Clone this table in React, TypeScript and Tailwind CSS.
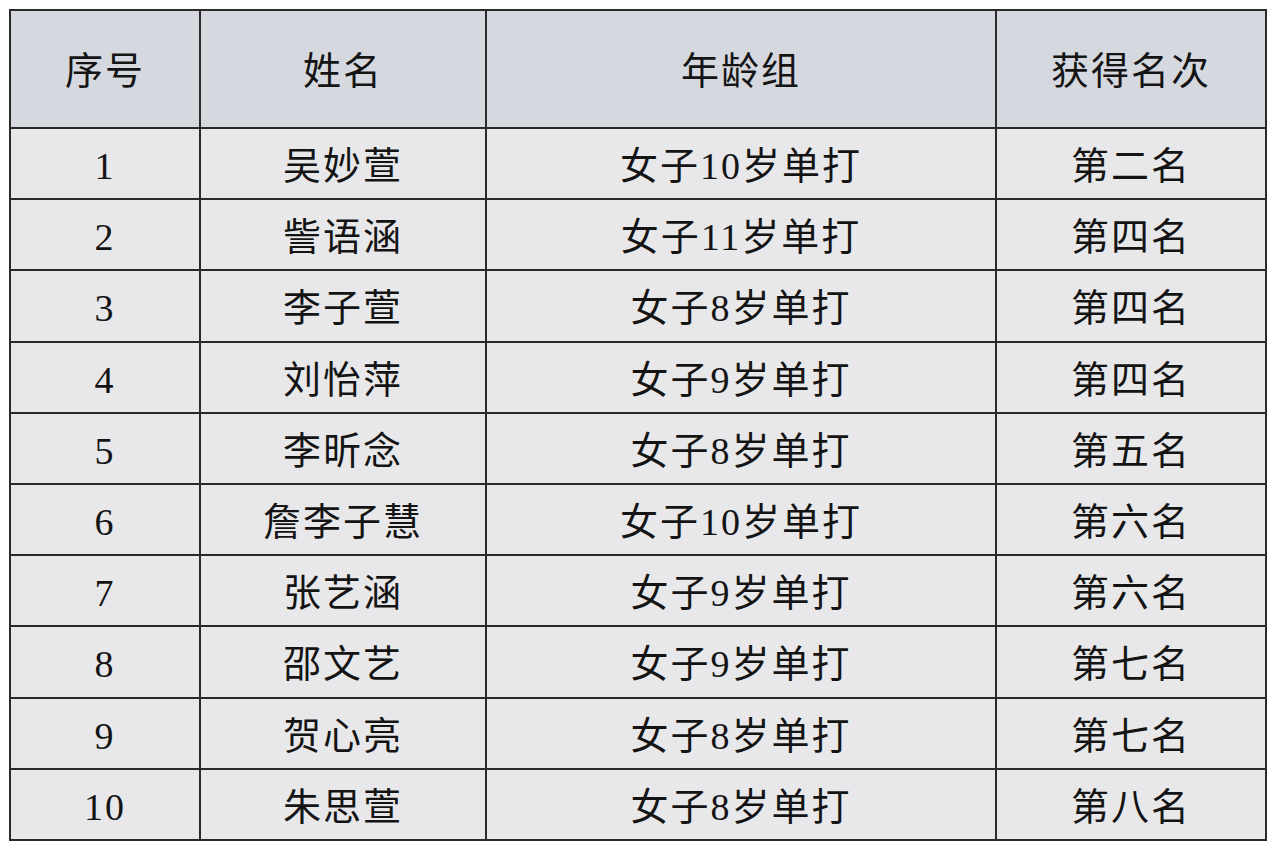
const rows = [
  ["1", "吴妙萱", "女子10岁单打", "第二名"],
  ["2", "訾语涵", "女子11岁单打", "第四名"],
  ["3", "李子萱", "女子8岁单打", "第四名"],
  ["4", "刘怡萍", "女子9岁单打", "第四名"],
  ["5", "李昕念", "女子8岁单打", "第五名"],
  ["6", "詹李子慧", "女子10岁单打", "第六名"],
  ["7", "张艺涵", "女子9岁单打", "第六名"],
  ["8", "邵文艺", "女子9岁单打", "第七名"],
  ["9", "贺心亮", "女子8岁单打", "第七名"],
  ["10", "朱思萱", "女子8岁单打", "第八名"],
];

const headers = ["序号", "姓名", "年龄组", "获得名次"];

// digits get the serif face, CJK falls back to Noto
function Cell({ text }: { text: string }) {
  const parts = text.split(/(\d+)/).filter(Boolean);
  return (
    <>
      {parts.map((p, i) =>
        /^\d+$/.test(p) ? (
          <span key={i} style={{ fontFamily: '"Liberation Serif", serif' }}>
            {p}
          </span>
        ) : (
          <span key={i}>{p}</span>
        )
      )}
    </>
  );
}

export default function App() {
  return (
    <div
      className="w-[1280px] h-[853px] bg-white pt-[9px] pl-[9px]"
      style={{ fontFamily: '"Liberation Serif", "Noto Sans CJK SC", serif' }}
    >
      <table className="border-collapse w-[1256px] text-[38px] text-[#141414] table-fixed">
        <colgroup>
          <col className="w-[190px]" />
          <col className="w-[286px]" />
          <col className="w-[510px]" />
          <col className="w-[270px]" />
        </colgroup>
        <thead>
          <tr className="h-[118px] bg-[#d6d8df]">
            {headers.map((h) => (
              <th key={h} className="border-2 border-[#2a2a2a] font-normal text-center tracking-[2px] pt-[4px] leading-none">
                {h}
              </th>
            ))}
          </tr>
        </thead>
        <tbody>
          {rows.map((r) => (
            <tr key={r[0]} className="h-[71.2px] bg-[#e8e8ea]">
              {r.map((c, i) => (
                <td key={i} className="border-2 border-[#2a2a2a] text-center tracking-[2px] pt-[5px] leading-none">
                  <Cell text={c} />
                </td>
              ))}
            </tr>
          ))}
        </tbody>
      </table>
    </div>
  );
}
